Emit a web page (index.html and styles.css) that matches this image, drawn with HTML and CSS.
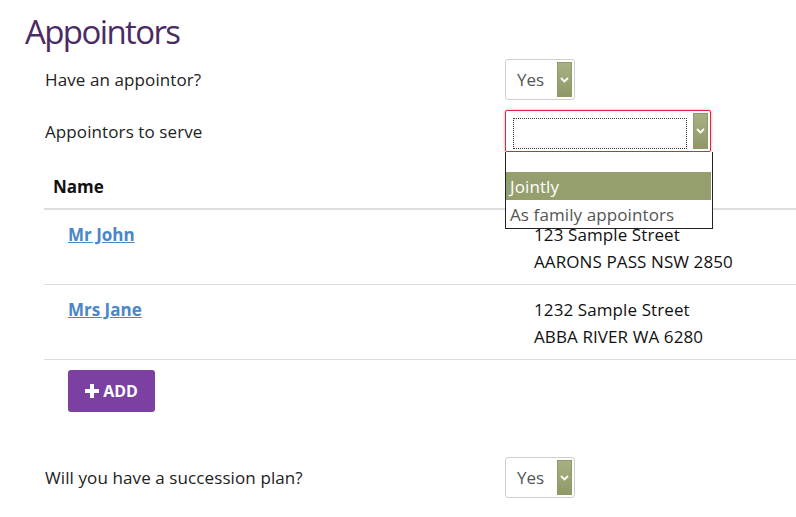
FILE: index.html
```html
<!DOCTYPE html>
<html lang="en">
<head>
<meta charset="utf-8">
<title>Appointors</title>
<link rel="stylesheet" href="styles.css">
</head>
<body>
<div class="page">
  <h1 class="title">Appointors</h1>

  <div class="form-row row-first">
    <div class="label">Have an appointor?</div>
    <div class="select small">
      <span class="value">Yes</span>
      <span class="arrow"><svg width="9" height="6" viewBox="0 0 9 6"><path d="M1 1 L4.5 4.5 L8 1" fill="none" stroke="#fff" stroke-width="1.8"/></svg></span>
    </div>
  </div>

  <div class="form-row row-serve">
    <div class="label">Appointors to serve</div>
    <div class="select wide error">
      <span class="focus-rect"></span>
      <span class="arrow"><svg width="9" height="6" viewBox="0 0 9 6"><path d="M1 1 L4.5 4.5 L8 1" fill="none" stroke="#fff" stroke-width="1.8"/></svg></span>
      <ul class="dropdown">
        <li class="opt blank">&nbsp;</li>
        <li class="opt active">Jointly</li>
        <li class="opt">As family appointors</li>
      </ul>
    </div>
  </div>

  <div class="table">
    <div class="thead">
      <div class="th">Name</div>
      <div class="th"></div>
    </div>
    <div class="tr">
      <div class="td name"><a href="#">Mr John</a></div>
      <div class="td addr">123 Sample Street<br>AARONS PASS NSW 2850</div>
    </div>
    <div class="tr">
      <div class="td name"><a href="#">Mrs Jane</a></div>
      <div class="td addr">1232 Sample Street<br>ABBA RIVER WA 6280</div>
    </div>
  </div>

  <button class="add-btn"><svg width="14" height="14" viewBox="0 0 14 14"><path d="M5 0h4v5h5v4H9v5H5V9H0V5h5z" fill="#fff"/></svg><span>ADD</span></button>

  <div class="form-row row-succession">
    <div class="label">Will you have a succession plan?</div>
    <div class="select small">
      <span class="value">Yes</span>
      <span class="arrow"><svg width="9" height="6" viewBox="0 0 9 6"><path d="M1 1 L4.5 4.5 L8 1" fill="none" stroke="#fff" stroke-width="1.8"/></svg></span>
    </div>
  </div>
</div>
</body>
</html>
```

FILE: styles.css
```css
html, body {
  margin: 0;
  padding: 0;
  background: #fff;
  overflow: hidden;
}
body {
  font-family: "Open Sans", "Noto Sans", sans-serif;
  color: #222;
  font-size: 17px;
  letter-spacing: 0.1px;
}
.page {
  width: 900px;
  padding-left: 25px;
}
.title {
  margin: 0;
  padding-top: 10px;
  font-size: 33px;
  line-height: 44px;
  font-weight: 400;
  color: #4b2b63;
  letter-spacing: -1.6px;
}
.form-row {
  display: flex;
  align-items: center;
  padding-left: 20px;
  margin-top: 6px;
}
.row-first {
  margin-top: 5px;
}
.row-serve {
  margin-top: 10px;
}
.label {
  width: 460px;
}
.select {
  position: relative;
  box-sizing: border-box;
  border: 1px solid #cfcfcf;
  border-radius: 3px;
  background: #fff;
  display: flex;
  align-items: center;
  letter-spacing: 0;
}
.select.small {
  width: 70px;
  height: 41px;
}
.select.wide {
  width: 206px;
  height: 42px;
}
.select.error {
  border: 1px solid #d8283a;
  border-radius: 2px;
  box-shadow: 0 0 3px rgba(220, 40, 60, 0.45);
}
.value {
  padding-left: 11px;
  color: #555;
  font-size: 17px;
}
.arrow {
  position: absolute;
  right: 2px;
  top: 2px;
  bottom: 2px;
  width: 15px;
  background: linear-gradient(to bottom, #a7b084, #8e9967);
  border: 1px solid #8f9a69;
  box-sizing: border-box;
  display: flex;
  align-items: center;
  justify-content: center;
}
.focus-rect {
  position: absolute;
  left: 7px;
  top: 7px;
  width: 174px;
  height: 31px;
  box-sizing: border-box;
  border: 1px dotted #333;
}
.dropdown {
  position: absolute;
  left: -1px;
  top: 41px;
  width: 206px;
  margin: 0;
  padding: 0;
  list-style: none;
  background: #fff;
  border: 1px solid #222;
  border-top: 0;
  z-index: 5;
}
.opt {
  height: 28px;
  line-height: 30px;
  padding-left: 4px;
  color: #555;
  font-size: 17px;
  letter-spacing: 0.1px;
}
.opt.blank {
  height: 20px;
}
.opt.active {
  background: #959f6e;
  color: #fff;
  margin: 0 1px 0 0;
}
.table {
  margin-left: 19px;
  margin-top: 1px;
}
.thead, .tr {
  display: grid;
  grid-template-columns: 490px 1fr;
}
.thead {
  height: 55px;
  border-bottom: 2px solid #ddd;
  align-items: center;
}
.th {
  font-weight: 700;
  padding-left: 9px;
  padding-top: 12px;
  color: #111;
  letter-spacing: 0;
}
.tr {
  border-bottom: 1px solid #ddd;
  padding: 11px 0 9px;
}
.td {
  line-height: 27px;
}
.name {
  padding-left: 24px;
}
.name a {
  color: #4a86c8;
  font-weight: 700;
  text-decoration: underline;
  letter-spacing: 0;
}
.addr {
  color: #111;
}
.add-btn {
  margin-left: 43px;
  margin-top: 10px;
  width: 87px;
  height: 42px;
  border: 0;
  border-radius: 3px;
  background: #7b40a1;
  color: #fff;
  font-family: "Open Sans", "Noto Sans", sans-serif;
  font-weight: 700;
  font-size: 16px;
  display: flex;
  align-items: center;
  justify-content: center;
  gap: 4px;
  padding: 0;
}
.row-succession {
  margin-top: 45px;
}
```
